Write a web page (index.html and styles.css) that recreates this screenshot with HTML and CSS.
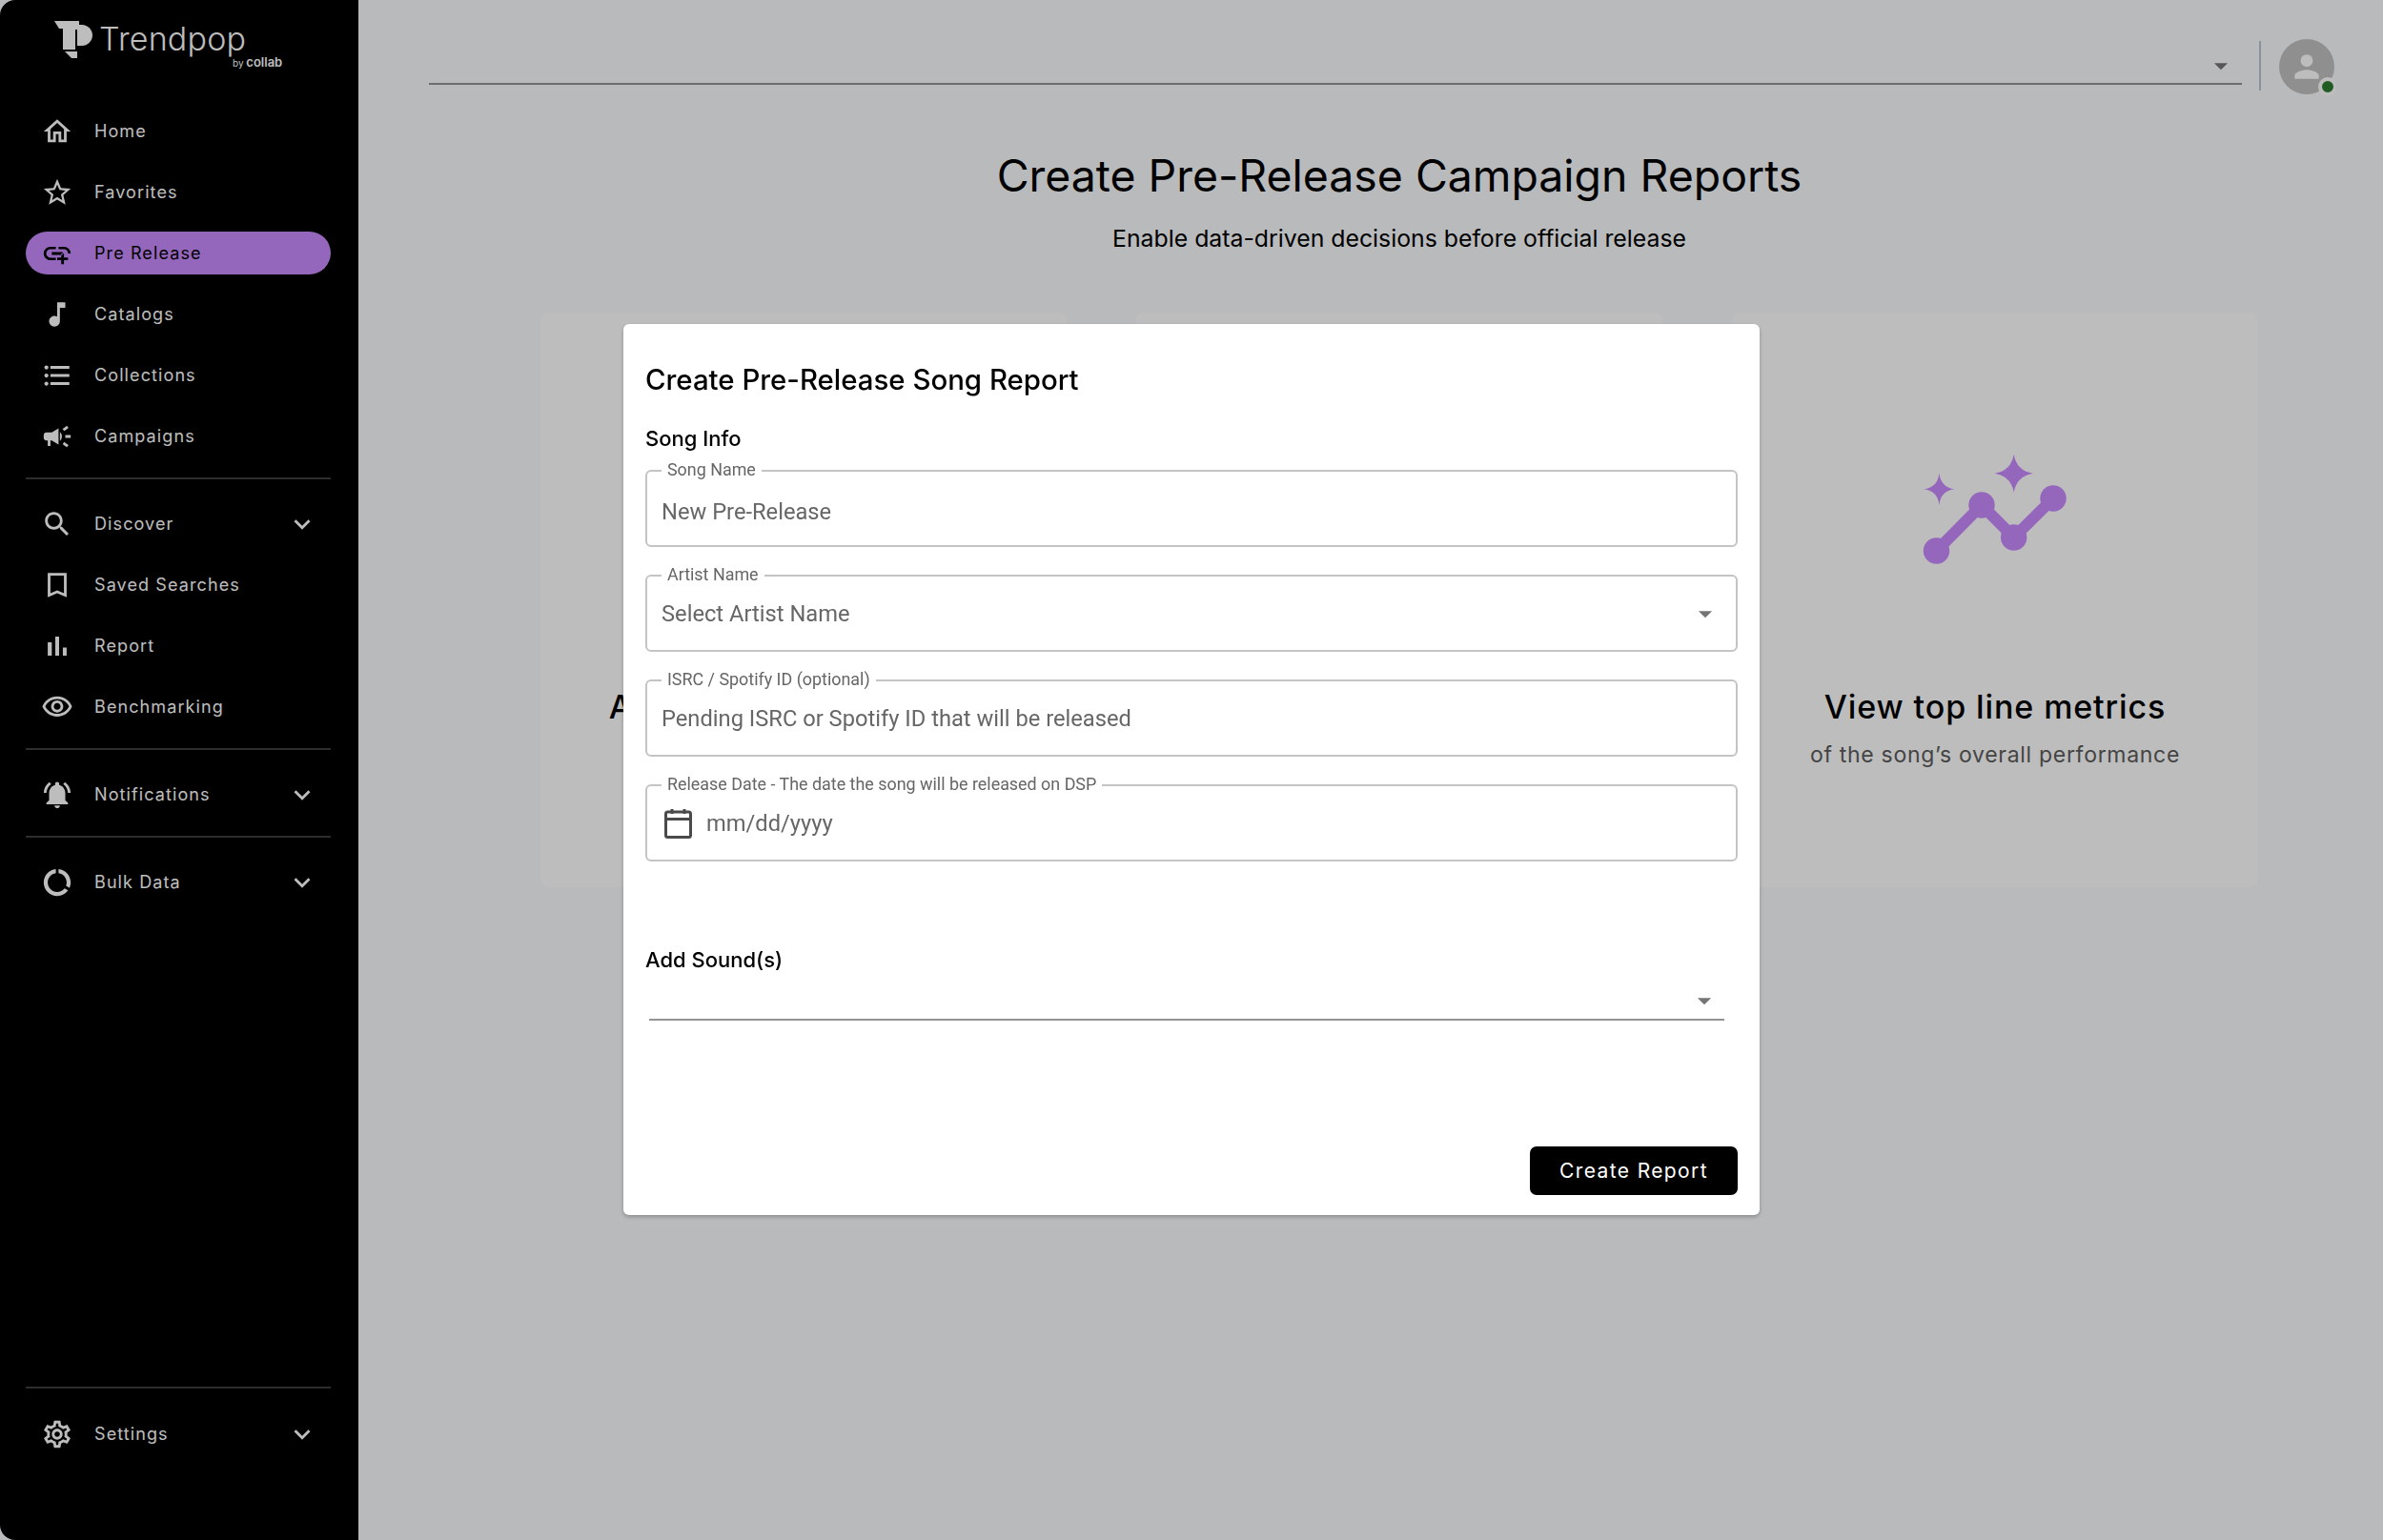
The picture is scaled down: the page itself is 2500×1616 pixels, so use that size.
FILE: index.html
```html
<!DOCTYPE html>
<html lang="en">
<head>
  <meta charset="UTF-8">
  <title>Trendpop - Pre Release</title>
  <link rel="stylesheet" href="styles.css">
</head>
<body>
<div class="app">
  <aside class="sidebar">
    <div class="logo">
      <svg class="logo-mark" viewBox="0 0 40 40"><path d="M0 0h26v9h-4v21H9V8H5z"/><path d="M24 4h5c6 0 11 5 11 11s-5 11-11 11h-5z"/><path d="M11 32h13v7H18z"/></svg>
      <div class="logo-words">
        <span class="logo-name">Trendpop</span>
        <span class="logo-by">by <b>collab</b></span>
      </div>
    </div>

    <nav class="nav-group nav-first">
      <a class="nav-item"><svg class="nav-icon" viewBox="0 0 24 24"><path d="M12 5.69l5 4.5V18h-2v-6H9v6H7v-7.81l5-4.5M12 3L2 12h3v8h6v-6h2v6h6v-8h3L12 3z"/></svg><span>Home</span></a>
      <a class="nav-item"><svg class="nav-icon" viewBox="0 0 24 24"><path d="M22 9.24l-7.19-.62L12 2 9.19 8.63 2 9.24l5.46 4.73L5.82 21 12 17.27 18.18 21l-1.63-7.03L22 9.24zM12 15.4l-3.76 2.27 1-4.28-3.32-2.88 4.38-.38L12 6.1l1.71 4.04 4.38.38-3.32 2.88 1 4.28L12 15.4z"/></svg><span>Favorites</span></a>
      <a class="nav-item active"><svg class="nav-icon" viewBox="0 0 24 24"><path d="M8 11h8v2H8zm12.1 1H22c0-2.76-2.24-5-5-5h-4v1.9h4c1.71 0 3.1 1.39 3.1 3.1zM3.9 12c0-1.71 1.39-3.1 3.1-3.1h4V7H7c-2.76 0-5 2.24-5 5s2.24 5 5 5h4v-1.9H7c-1.71 0-3.1-1.39-3.1-3.1zM17 12h-2v3h-3v2h3v3h2v-3h3v-2h-3z"/></svg><span>Pre Release</span></a>
      <a class="nav-item"><svg class="nav-icon" viewBox="0 0 24 24"><path d="M12 3l.01 10.55c-.59-.34-1.27-.55-2-.55C7.79 13 6 14.79 6 17s1.79 4 4.01 4S14 19.21 14 17V7h4V3h-6z"/></svg><span>Catalogs</span></a>
      <a class="nav-item"><svg class="nav-icon" viewBox="0 0 24 24"><path d="M4 10.5c-.83 0-1.5.67-1.5 1.5s.67 1.5 1.5 1.5 1.5-.67 1.5-1.5-.67-1.5-1.5-1.5zm0-6c-.83 0-1.5.67-1.5 1.5S3.17 7.5 4 7.5 5.5 6.83 5.5 6 4.83 4.5 4 4.5zm0 12c-.83 0-1.5.68-1.5 1.5s.68 1.5 1.5 1.5 1.5-.68 1.5-1.5-.67-1.5-1.5-1.5zM7 19h14v-2H7v2zm0-6h14v-2H7v2zm0-8v2h14V5H7z"/></svg><span>Collections</span></a>
      <a class="nav-item"><svg class="nav-icon" viewBox="0 0 24 24"><path d="M18 11v2h4v-2h-4zm-2 6.61c.96.71 2.21 1.65 3.2 2.39.4-.53.8-1.07 1.2-1.6-.99-.74-2.24-1.68-3.2-2.4-.4.54-.8 1.08-1.2 1.61zM20.4 5.6c-.4-.53-.8-1.07-1.2-1.6-.99.74-2.24 1.68-3.2 2.4.4.53.8 1.07 1.2 1.6.96-.72 2.21-1.65 3.2-2.4zM4 9c-1.1 0-2 .9-2 2v2c0 1.1.9 2 2 2h1v4h2v-4h1l5 3V6L8 9H4zm11.5 3c0-1.33-.58-2.53-1.5-3.35v6.69c.92-.81 1.5-2.01 1.5-3.34z"/></svg><span>Campaigns</span></a>
    </nav>

    <nav class="nav-group">
      <a class="nav-item"><svg class="nav-icon" viewBox="0 0 24 24"><path d="M15.5 14h-.79l-.28-.27C15.41 12.59 16 11.11 16 9.5 16 5.91 13.09 3 9.5 3S3 5.91 3 9.5 5.91 16 9.5 16c1.61 0 3.09-.59 4.23-1.57l.27.28v.79l5 4.99L20.49 19l-4.99-5zm-6 0C7.01 14 5 11.99 5 9.5S7.01 5 9.5 5 14 7.01 14 9.5 11.99 14 9.5 14z"/></svg><span>Discover</span><svg class="nav-chevron" viewBox="0 0 24 24"><path d="M16.59 8.59L12 13.17 7.41 8.59 6 10l6 6 6-6z"/></svg></a>
      <a class="nav-item"><svg class="nav-icon" viewBox="0 0 24 24"><path d="M19 3H5v18l7-3 7 3V3zm-2 15l-5-2.18L7 18V5h10v13z"/></svg><span>Saved Searches</span></a>
      <a class="nav-item"><svg class="nav-icon" viewBox="0 0 24 24"><path d="M5 9.2h3V19H5zM10.6 5h2.8v14h-2.8zm5.6 8H19v6h-2.8z"/></svg><span>Report</span></a>
      <a class="nav-item"><svg class="nav-icon" viewBox="0 0 24 24"><path d="M12 6c3.79 0 7.17 2.13 8.82 5.5C19.17 14.87 15.79 17 12 17s-7.17-2.13-8.82-5.5C4.83 8.13 8.21 6 12 6m0-2C7 4 2.73 7.11 1 11.5 2.73 15.89 7 19 12 19s9.27-3.11 11-7.5C21.27 7.11 17 4 12 4zm0 5c1.38 0 2.5 1.12 2.5 2.5S13.38 14 12 14s-2.5-1.12-2.5-2.5S10.62 9 12 9m0-2c-2.48 0-4.5 2.02-4.5 4.5S9.52 16 12 16s4.5-2.02 4.5-4.5S14.48 7 12 7z"/></svg><span>Benchmarking</span></a>
    </nav>

    <nav class="nav-group">
      <a class="nav-item"><svg class="nav-icon" viewBox="0 0 24 24"><path d="M7.58 4.08L6.15 2.65C3.75 4.48 2.17 7.3 2.03 10.5h2c.15-2.65 1.51-4.97 3.55-6.42zm12.39 6.42h2c-.15-3.2-1.73-6.02-4.12-7.85l-1.42 1.43c2.02 1.45 3.39 3.77 3.54 6.42zM18 11c0-3.07-1.64-5.64-4.5-6.32V4c0-.83-.67-1.5-1.5-1.5s-1.5.67-1.5 1.5v.68C7.63 5.36 6 7.92 6 11v5l-2 2v1h16v-1l-2-2v-5zm-6 11c.14 0 .27-.01.4-.04.65-.14 1.18-.58 1.44-1.18.1-.24.15-.5.15-.78h-4c.01 1.1.9 2 2.01 2z"/></svg><span>Notifications</span><svg class="nav-chevron" viewBox="0 0 24 24"><path d="M16.59 8.59L12 13.17 7.41 8.59 6 10l6 6 6-6z"/></svg></a>
    </nav>

    <nav class="nav-group">
      <a class="nav-item"><svg class="nav-icon" viewBox="0 0 24 24"><path d="M13 2.05v3.03c3.39.49 6 3.39 6 6.92 0 .9-.18 1.75-.48 2.54l2.6 1.53c.56-1.24.88-2.62.88-4.07 0-5.18-3.95-9.45-9-9.95zM12 19c-3.87 0-7-3.13-7-7 0-3.53 2.61-6.43 6-6.92V2.05c-5.06.5-9 4.76-9 9.95 0 5.52 4.47 10 9.99 10 3.31 0 6.24-1.61 8.06-4.09l-2.6-1.53C16.17 17.98 14.21 19 12 19z"/></svg><span>Bulk Data</span><svg class="nav-chevron" viewBox="0 0 24 24"><path d="M16.59 8.59L12 13.17 7.41 8.59 6 10l6 6 6-6z"/></svg></a>
    </nav>

    <nav class="nav-group nav-bottom">
      <a class="nav-item"><svg class="nav-icon" viewBox="0 0 24 24"><path d="M19.43 12.98c.04-.32.07-.64.07-.98 0-.34-.03-.66-.07-.98l2.11-1.65c.19-.15.24-.42.12-.64l-2-3.46c-.09-.16-.26-.25-.44-.25-.06 0-.12.01-.17.03l-2.49 1c-.52-.4-1.08-.73-1.69-.98l-.38-2.65C14.46 2.18 14.25 2 14 2h-4c-.25 0-.46.18-.49.42l-.38 2.65c-.61.25-1.17.59-1.69.98l-2.49-1c-.06-.02-.12-.03-.18-.03-.17 0-.34.09-.43.25l-2 3.46c-.13.22-.07.49.12.64l2.11 1.65c-.04.32-.07.65-.07.98 0 .33.03.66.07.98l-2.11 1.65c-.19.15-.24.42-.12.64l2 3.46c.09.16.26.25.44.25.06 0 .12-.01.17-.03l2.49-1c.52.4 1.08.73 1.69.98l.38 2.65c.03.24.24.42.49.42h4c.25 0 .46-.18.49-.42l.38-2.65c.61-.25 1.17-.59 1.69-.98l2.49 1c.06.02.12.03.18.03.17 0 .34-.09.43-.25l2-3.46c.12-.22.07-.49-.12-.64l-2.11-1.65zm-1.98-1.71c.04.31.05.52.05.73 0 .21-.02.43-.05.73l-.14 1.13.89.7 1.08.84-.7 1.21-1.27-.51-1.04-.42-.9.68c-.43.32-.84.56-1.25.73l-1.06.43-.16 1.13-.2 1.35h-1.4l-.19-1.35-.16-1.13-1.06-.43c-.43-.18-.83-.41-1.23-.71l-.91-.7-1.06.43-1.27.51-.7-1.21 1.08-.84.89-.7-.14-1.13c-.03-.31-.05-.54-.05-.74s.02-.43.05-.73l.14-1.13-.89-.7-1.08-.84.7-1.21 1.27.51 1.04.42.9-.68c.43-.32.84-.56 1.25-.73l1.06-.43.16-1.13.2-1.35h1.39l.19 1.35.16 1.13 1.06.43c.43.18.83.41 1.23.71l.91.7 1.06-.43 1.27-.51.7 1.21-1.07.85-.89.7.14 1.13zM12 8c-2.21 0-4 1.79-4 4s1.79 4 4 4 4-1.79 4-4-1.79-4-4-4zm0 6c-1.1 0-2-.9-2-2s.9-2 2-2 2 .9 2 2-.9 2-2 2z"/></svg><span>Settings</span><svg class="nav-chevron" viewBox="0 0 24 24"><path d="M16.59 8.59L12 13.17 7.41 8.59 6 10l6 6 6-6z"/></svg></a>
    </nav>
  </aside>

  <main class="main">
    <div class="topbar">
      <div class="top-select">
        <svg class="arrow" viewBox="0 0 24 24"><path d="M7 10l5 5 5-5z"/></svg>
      </div>
      <div class="avatar">
        <svg class="avatar-icon" viewBox="0 0 24 24"><path d="M12 12c2.21 0 4-1.79 4-4s-1.79-4-4-4-4 1.79-4 4 1.79 4 4 4zm0 2c-2.67 0-8 1.34-8 4v2h16v-2c0-2.66-5.33-4-8-4z"/></svg>
        <span class="status-dot"></span>
      </div>
    </div>

    <section class="hero">
      <h1>Create Pre-Release Campaign Reports</h1>
      <p>Enable data-driven decisions before official release</p>
      <div class="cards">
        <div class="card">
          <div class="card-art"></div>
          <div class="card-title">Add pre-release details</div>
        </div>
        <div class="card"></div>
        <div class="card">
          <div class="card-art">
            <svg class="metrics-icon" viewBox="0 0 152 118">
              <path class="metrics-line" d="M15.5 102L63 54 96.7 88 138 47"/>
              <circle cx="15.5" cy="102" r="13.7"/>
              <circle cx="63" cy="54" r="13.7"/>
              <circle cx="96.7" cy="88" r="13.7"/>
              <circle cx="138" cy="47" r="13.7"/>
              <path d="M96.7 .7Q99.5 17.900 116.700 20.700 99.500 23.500 96.700 40.700 93.900 23.500 76.700 20.700 93.900 17.900 96.700 .7z"/>
              <path d="M18.400 20.600Q20 35.700 34.800 37.300 20 38.900 18.400 54 16.800 38.900 2 37.300 16.800 35.700 18.400 20.600z"/>
            </svg>
          </div>
          <div class="card-title">View top line metrics</div>
          <div class="card-text">of the song’s overall performance</div>
        </div>
      </div>
    </section>
  </main>
</div>

<div class="backdrop">
  <div class="modal">
    <h2 class="modal-title">Create Pre-Release Song Report</h2>
    <h3 class="modal-section">Song Info</h3>
    <div class="fields">
      <div class="field field-song">
        <label class="field-label">Song Name</label>
        <span class="field-text">New Pre-Release</span>
      </div>
      <div class="field">
        <label class="field-label">Artist Name</label>
        <span class="field-text">Select Artist Name</span>
        <svg class="arrow" viewBox="0 0 24 24"><path d="M7 10l5 5 5-5z"/></svg>
      </div>
      <div class="field">
        <label class="field-label">ISRC / Spotify ID (optional)</label>
        <span class="field-text">Pending ISRC or Spotify ID that will be released</span>
      </div>
      <div class="field">
        <label class="field-label">Release Date - The date the song will be released on DSP</label>
        <svg class="calendar" viewBox="0 0 29 32"><path d="M8 1v5M21 1v5"/><rect x="1.500" y="4" width="26" height="26.500" rx="2"/><path d="M1.500 11.500h26"/></svg>
        <span class="field-text">mm/dd/yyyy</span>
      </div>
    </div>
    <h3 class="modal-section sounds-title">Add Sound(s)</h3>
    <div class="sounds-select">
      <svg class="arrow" viewBox="0 0 24 24"><path d="M7 10l5 5 5-5z"/></svg>
    </div>
    <div class="modal-actions">
      <button class="create-btn">Create Report</button>
    </div>
  </div>
</div>
</body>
</html>
```

FILE: styles.css
```css
* {
  box-sizing: border-box;
}

body {
  margin: 0;
  height: 1616px;
  overflow: hidden;
  font-family: Inter, "Liberation Sans", sans-serif;
  background-color: #fafbfe;
  color: #000;
}

.app {
  display: flex;
  height: 1616px;
}

/* Sidebar */
.sidebar {
  width: 376px;
  flex-shrink: 0;
  display: flex;
  flex-direction: column;
  padding-bottom: 70px;
  background-color: #000;
  color: #fff;
  border-radius: 16px 0 0 16px;
}

.logo {
  display: flex;
  gap: 7px;
  height: 115px;
  padding: 22px 0 0 57px;
}

.logo-mark {
  width: 40px;
  height: 40px;
  fill: #fff;
}

.logo-words {
  display: flex;
  flex-direction: column;
  align-items: flex-end;
  padding-top: 1px;
}

.logo-name {
  font-size: 34px;
  font-weight: 300;
  line-height: 36px;
  letter-spacing: 0.2px;
}

.logo-by {
  margin: -1px -38px 0 0;
  font-size: 10px;
  line-height: 14px;
}

.logo-by b {
  font-size: 13px;
  font-weight: 600;
}

.nav-group {
  margin: 2px 29px 0 27px;
  padding-top: 24px;
  border-top: 2px solid #3d3d3d;
}

.nav-first {
  margin-top: 0;
  padding-top: 0;
  border-top: none;
}

.nav-bottom {
  margin-top: auto;
  padding-top: 25px;
}

.nav-item {
  display: flex;
  align-items: center;
  gap: 22px;
  height: 45px;
  margin-bottom: 19px;
  padding: 0 13px 0 16px;
  border-radius: 23px;
  font-size: 18px;
  letter-spacing: 1.1px;
}

.nav-item.active {
  background-color: #c88bff;
  color: #000;
}

.nav-icon {
  width: 34px;
  height: 34px;
  flex-shrink: 0;
  fill: currentColor;
}

.nav-chevron {
  width: 34px;
  height: 34px;
  margin-left: auto;
  fill: currentColor;
}

/* Main */
.main {
  flex: 1;
  min-width: 0;
}

.topbar {
  display: flex;
  align-items: flex-start;
  padding: 41px 51px 0 74px;
}

.top-select {
  flex: 1;
  display: flex;
  justify-content: flex-end;
  height: 48px;
  padding: 11px 5px 0 0;
  border-bottom: 2px solid #949494;
}

.arrow {
  width: 34px;
  height: 34px;
  flex-shrink: 0;
  fill: #757575;
}

.avatar {
  position: relative;
  display: flex;
  align-items: center;
  justify-content: center;
  width: 58px;
  height: 58px;
  margin-left: 39px;
  border-radius: 50%;
  background-color: #c2c2c2;
}

.avatar::before {
  content: '';
  position: absolute;
  left: -21px;
  top: 2px;
  width: 2px;
  height: 52px;
  background-color: #bac4d2;
}

.avatar-icon {
  width: 38px;
  height: 38px;
  fill: #fff;
}

.status-dot {
  position: absolute;
  right: -3px;
  bottom: -2px;
  width: 20px;
  height: 20px;
  border: 4px solid #fff;
  border-radius: 50%;
  background-color: #2e7d32;
}

.hero {
  padding: 0 131px 0 191px;
  text-align: center;
}

.hero h1 {
  margin: 56px 0 0;
  font-size: 46.400px;
  font-weight: 400;
  line-height: 58px;
}

.hero p {
  margin: 21px 0 0;
  font-size: 24.800px;
  line-height: 32px;
}

.cards {
  display: grid;
  grid-template-columns: repeat(3, 1fr);
  gap: 73px;
  margin-top: 62px;
}

.card {
  height: 603px;
  padding-top: 148px;
  background-color: #fff;
  border-radius: 8px;
}

.card-art {
  height: 118px;
  margin-bottom: 127px;
  padding-right: 3px;
}

.metrics-icon {
  display: block;
  width: 152px;
  height: 118px;
  margin: 0 auto;
  fill: #c88bff;
}

.metrics-line {
  fill: none;
  stroke: #c88bff;
  stroke-width: 12;
}

.card-title {
  font-size: 34px;
  font-weight: 500;
  line-height: 42px;
  letter-spacing: 0.900px;
}

.card:first-child .card-title {
  padding-right: 8px;
}

.card-text {
  margin-top: 14px;
  font-size: 23px;
  line-height: 30px;
  letter-spacing: 0.700px;
  color: #5c5c5c;
}

/* Modal */
.backdrop {
  position: fixed;
  inset: 0;
  display: flex;
  align-items: center;
  justify-content: center;
  padding-bottom: 1px;
  background-color: rgba(0, 0, 0, 0.26);
}

.modal {
  display: flex;
  flex-direction: column;
  width: 1192px;
  height: 935px;
  padding: 41px 23px 21px 23px;
  background-color: #fff;
  border-radius: 6px;
  box-shadow: 0 2px 4px rgba(0, 0, 0, 0.25);
}

.modal-title {
  margin: 0;
  font-size: 29.400px;
  font-weight: 500;
  line-height: 36px;
}

.modal-section {
  margin: 29px 0 0;
  font-size: 22px;
  font-weight: 500;
  line-height: 28px;
}

.fields {
  display: flex;
  flex-direction: column;
  gap: 29px;
  margin-top: 19px;
}

.field {
  position: relative;
  display: flex;
  align-items: center;
  gap: 15px;
  height: 81px;
  padding: 0 15px;
  border: 2px solid #c4c4c4;
  border-radius: 6px;
  font-family: Roboto, "Liberation Sans", sans-serif;
}

.field-song {
  padding-top: 6px;
}

.field-label {
  position: absolute;
  top: -12px;
  left: 15px;
  padding: 0 6px;
  background-color: #fff;
  font-size: 17.900px;
  line-height: 20px;
  color: #666;
}

.field-text {
  flex: 1;
  font-size: 23.700px;
  color: #666;
}

.calendar {
  width: 29px;
  height: 32px;
  margin-left: 3px;
  flex-shrink: 0;
  fill: none;
  stroke: #4a4a4a;
  stroke-width: 3;
}

.sounds-title {
  margin-top: 89px;
}

.sounds-select {
  display: flex;
  justify-content: flex-end;
  height: 50px;
  margin: 0 14px 0 4px;
  padding: 12px 4px 0 0;
  border-bottom: 2px solid #949494;
}

.modal-actions {
  display: flex;
  justify-content: flex-end;
  margin-top: auto;
}

.create-btn {
  width: 218px;
  height: 51px;
  border: none;
  border-radius: 7px;
  background-color: #000;
  color: #fff;
  font-family: Inter, "Liberation Sans", sans-serif;
  font-size: 21px;
  letter-spacing: 1.370px;
}
```
